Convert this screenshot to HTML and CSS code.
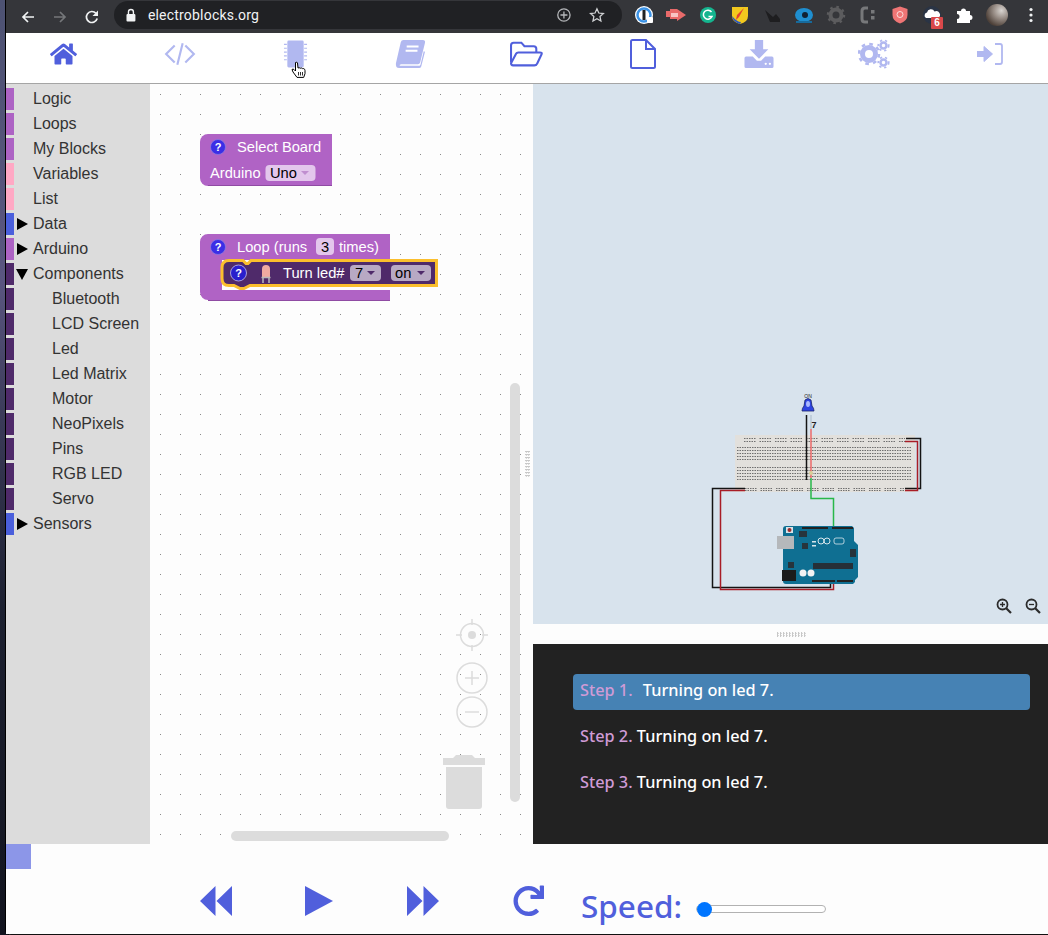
FILE: index.html
```html
<!DOCTYPE html>
<html lang="en">
<head>
    <meta charset="UTF-8">
    <title>Electroblocks</title>
    <link rel="stylesheet" href="styles.css">
</head>
<body>
<div class="window">
    <!-- browser chrome -->
    <div class="browser-bar">
        <svg class="chrome-btn" viewBox="0 0 16 16"><path d="M14 8H3M8 3 3 8l5 5" fill="none" stroke="#f1f3f4" stroke-width="1.7"/></svg>
        <svg class="chrome-btn dim" viewBox="0 0 16 16"><path d="M2 8h11M8 3l5 5-5 5" fill="none" stroke="#75777a" stroke-width="1.7"/></svg>
        <svg class="chrome-btn" viewBox="0 0 16 16"><path d="M13.2 9.5A5.5 5.5 0 1 1 12 4.3" fill="none" stroke="#f1f3f4" stroke-width="1.7"/><path d="M14 1.5V7H8.5z" fill="#f1f3f4"/></svg>
        <div class="url-pill">
            <svg class="lock" viewBox="0 0 12 14"><path d="M3.5 6V4a2.5 2.5 0 0 1 5 0v2" fill="none" stroke="#f1f3f4" stroke-width="1.4"/><rect x="1.5" y="6" width="9" height="7.5" rx="1" fill="#f1f3f4"/></svg>
            <span class="url-text">electroblocks.org</span>
            <svg class="url-icon" viewBox="0 0 16 16"><circle cx="8" cy="8" r="6.2" fill="none" stroke="#b5b7ba" stroke-width="1.3"/><path d="M8 4.5v7M4.5 8h7" stroke="#b5b7ba" stroke-width="1.3"/></svg>
            <svg class="url-icon" viewBox="0 0 16 16"><path d="m8 1.8 1.9 4.2 4.6.5-3.4 3.1.9 4.5-4-2.3-4 2.3.9-4.5L1.5 6.5l4.6-.5z" fill="none" stroke="#d0d2d4" stroke-width="1.3"/></svg>
        </div>
        <div class="extensions">
            <svg class="ext" viewBox="0 0 20 20"><circle cx="10" cy="10" r="9" fill="#fff"/><circle cx="10" cy="10" r="6.5" fill="none" stroke="#3b93e6" stroke-width="2.5"/><rect x="8.5" y="5" width="3" height="10" fill="#222"/><rect x="13" y="12" width="6" height="6" rx="1" fill="#fff"/></svg>
            <svg class="ext" viewBox="0 0 20 20"><path d="M0 6h4V4h7l9 6-9 6v-2H4v-2H0z" fill="#e86a6a"/><rect x="5" y="8" width="7" height="4" fill="#f8c4c4"/></svg>
            <svg class="ext" viewBox="0 0 20 20"><circle cx="10" cy="10" r="8" fill="#15b58f"/><path d="M13.5 7A4.5 4.5 0 1 0 14 11.5H10.5" fill="none" stroke="#fff" stroke-width="1.5"/></svg>
            <svg class="ext" viewBox="0 0 20 20"><path d="M2 2h16v9q0 6-8 8-8-2-8-8z" fill="#f2c81e"/><path d="M14 3 9 12l-3 3 1-5z" fill="#e0402e"/><path d="M2 11q5 6 9 6l-1 2q-7-2-8-8z" fill="#2a55c0"/></svg>
            <svg class="ext" viewBox="0 0 20 20"><path d="M3 5l8 7 3-3 4 5v3H8z" fill="#1e1e20"/></svg>
            <svg class="ext" viewBox="0 0 20 20"><ellipse cx="10" cy="10" rx="9" ry="7" fill="#1f8fd0"/><circle cx="11" cy="10" r="3" fill="#123"/><path d="M2 16h16v2H2z" fill="#176a9c"/></svg>
            <svg class="ext" viewBox="0 0 20 20"><circle cx="10" cy="10" r="5.5" fill="none" stroke="#5c5c5e" stroke-width="4"/><circle cx="10" cy="10" r="8" fill="none" stroke="#5c5c5e" stroke-width="2.5" stroke-dasharray="2.5 3.8"/></svg>
            <svg class="ext" viewBox="0 0 20 20"><path d="M10 3H7Q4 3 4 6v8q0 3 3 3h3" fill="none" stroke="#77787a" stroke-width="3"/><rect x="13" y="5" width="3.5" height="3.5" fill="#77787a"/><rect x="13" y="11" width="3.5" height="3.5" fill="#77787a"/></svg>
            <svg class="ext" viewBox="0 0 20 20"><path d="M10 1.5 17.5 4v6q0 6-7.5 8.5Q2.5 16 2.5 10V4z" fill="#ef7575"/><circle cx="10" cy="9.5" r="3" fill="none" stroke="#fbdcdc" stroke-width="1"/></svg>
            <div class="ext cloud">
                <svg viewBox="0 0 20 20"><circle cx="10" cy="10" r="9" fill="#2a3445"/><path d="M4 13a3 3 0 0 1 1-5.5 4 4 0 0 1 7.5-1A3.5 3.5 0 0 1 16 13z" fill="#fff"/></svg>
                <span class="badge">6</span>
            </div>
            <svg class="ext" viewBox="0 0 20 20"><path d="M3 6h4a2.5 2.5 0 1 1 5 0h4v4a2.5 2.5 0 1 1 0 5v3H3v-4a2.5 2.5 0 1 0 0-5z" fill="#fff"/></svg>
            <div class="avatar"></div>
            <svg class="ext-menu" viewBox="0 0 4 16"><circle cx="2" cy="2.5" r="1.6" fill="#f1f3f4"/><circle cx="2" cy="8" r="1.6" fill="#f1f3f4"/><circle cx="2" cy="13.5" r="1.6" fill="#f1f3f4"/></svg>
        </div>
    </div>

    <!-- main navigation -->
    <nav class="nav">
        <a class="nav-item">
            <svg class="nav-icon home" viewBox="0 0 576 512"><path d="M280.37 148.26L96 300.11V464a16 16 0 0 0 16 16l112.06-.29a16 16 0 0 0 15.92-16V368a16 16 0 0 1 16-16h64a16 16 0 0 1 16 16v95.64a16 16 0 0 0 16 16.05L464 480a16 16 0 0 0 16-16V300L295.67 148.26a12.19 12.19 0 0 0-15.3 0zM571.6 251.47L488 182.56V44.05a12 12 0 0 0-12-12h-56a12 12 0 0 0-12 12v72.61L318.47 43a48 48 0 0 0-61 0L4.34 251.47a12 12 0 0 0-1.6 16.9l25.5 31A12 12 0 0 0 45.15 301l235.22-193.74a12.19 12.19 0 0 1 15.3 0L530.9 301a12 12 0 0 0 16.9-1.6l25.5-31a12 12 0 0 0-1.7-16.93z"/></svg>
        </a>
        <a class="nav-item off">
            <svg class="nav-icon" viewBox="0 0 30 24"><path d="M10 4 2 12l8 8M20 4l8 8-8 8M17.5 2l-5 20" fill="none" stroke="currentColor" stroke-width="2"/></svg>
        </a>
        <a class="nav-item off">
            <svg class="nav-icon chip" viewBox="0 0 26 28"><rect x="4.5" y="0" width="17" height="28" rx="1.5"/><path d="M1 4h3M1 8h3M1 12h3M1 16h3M1 20h3M22 4h3M22 8h3M22 12h3M22 16h3M22 20h3" stroke="currentColor" stroke-width="1.2"/></svg>
        </a>
        <a class="nav-item off">
            <svg class="nav-icon" viewBox="0 0 28 26"><path d="M7 0h18q2.5 0 2 2.5L22.500 21q-.5 1.500-2 1.500H5Q3 22.500 3.500 24H22l.8-1 3-12.500 1.200.5L23.500 24.500q-.5 1.500-2 1.500H3Q-.5 26 0 21.500L4.500 2Q5 0 7 0z"/><path d="M10 6h11M9 10h11" stroke="#fff" stroke-width="1.8"/></svg>
        </a>
        <a class="nav-item">
            <svg class="nav-icon wide" viewBox="0 0 32 24"><path d="M1 20V3.500Q1 1 3.500 1h7.500l3 3.500h9q2.500 0 2.500 2.500v3M1 21 6 11.500Q6.500 10.500 8 10.500h21q2.500 0 1.500 2L26.500 21q-.8 2-3 2H3q-2 0-2-2z" fill="none" stroke="currentColor" stroke-width="2"/></svg>
        </a>
        <a class="nav-item">
            <svg class="nav-icon tall" viewBox="0 0 26 30"><path d="M1 2.500Q1 1 2.500 1H16l9 9v17.500q0 1.500-1.500 1.500h-21Q1 29 1 27.500zM16 1v9h9" fill="none" stroke="currentColor" stroke-width="2"/></svg>
        </a>
        <a class="nav-item off">
            <svg class="nav-icon" viewBox="0 0 28 27"><path d="M10 0h8v9h5l-9 9-9-9h5zM0 17.500Q0 16 1.500 16H8l4 4h4l4-4h6.500q1.500 0 1.500 1.500v8q0 1.500-1.500 1.500h-25Q0 27 0 25.500z"/><circle cx="20.5" cy="23" r="1.1" fill="#fff"/><circle cx="24.5" cy="23" r="1.1" fill="#fff"/></svg>
        </a>
        <a class="nav-item off">
            <svg class="nav-icon tall" viewBox="0 0 32 29">
                <circle cx="11" cy="14.5" r="6.5" fill="none" stroke="currentColor" stroke-width="5"/>
                <circle cx="11" cy="14.5" r="10" fill="none" stroke="currentColor" stroke-width="2.6" stroke-dasharray="3.6 4.25"/>
                <circle cx="25.5" cy="6" r="3" fill="none" stroke="currentColor" stroke-width="2.5"/>
                <circle cx="25.5" cy="6" r="5.2" fill="none" stroke="currentColor" stroke-width="1.8" stroke-dasharray="2.2 2.88"/>
                <circle cx="25.5" cy="23" r="3" fill="none" stroke="currentColor" stroke-width="2.5"/>
                <circle cx="25.5" cy="23" r="5.2" fill="none" stroke="currentColor" stroke-width="1.8" stroke-dasharray="2.2 2.88"/>
            </svg>
        </a>
        <a class="nav-item off">
            <svg class="nav-icon login" viewBox="0 0 26 22"><path d="M0 8.5h7V3.500L15.500 11 7 18.500v-5H0z" stroke="currentColor" stroke-linejoin="round"/><path d="M18 1h5q2 0 2 2v16q0 2-2 2h-5" fill="none" stroke="currentColor" stroke-width="1.8"/></svg>
        </a>
        <svg class="hand-cursor" viewBox="0 0 16 19"><path d="M4.500 1.500q1.500-1 2 .5l.5 5 1.200-.3 1 .5 1.300-.2 1 .6 1.300 0q1.200.5 1.200 2v3l-1.300 3.800H6L2 11 1 8.500q1-1 2.200.2L4.500 10z" fill="#fff" stroke="#000" stroke-width="1"/><path d="M7.5 11v3.500M9.5 11v3.500M11.5 11v3.500" stroke="#000" stroke-width=".8"/></svg>
    </nav>

    <div class="main">
        <!-- toolbox categories -->
        <ul class="toolbox">
            <li class="cat purple">Logic</li>
            <li class="cat purple">Loops</li>
            <li class="cat purple">My Blocks</li>
            <li class="cat pink">Variables</li>
            <li class="cat pink">List</li>
            <li class="cat blue closed">Data</li>
            <li class="cat purple closed">Arduino</li>
            <li class="cat dark open">Components</li>
            <li class="cat dark sub">Bluetooth</li>
            <li class="cat dark sub">LCD Screen</li>
            <li class="cat dark sub">Led</li>
            <li class="cat dark sub">Led Matrix</li>
            <li class="cat dark sub">Motor</li>
            <li class="cat dark sub">NeoPixels</li>
            <li class="cat dark sub">Pins</li>
            <li class="cat dark sub">RGB LED</li>
            <li class="cat dark sub">Servo</li>
            <li class="cat blue closed">Sensors</li>
        </ul>

        <!-- block workspace -->
        <div class="workspace">
            <svg class="block-canvas" viewBox="150 84 383 760">
                <path d="M200 142a8 8 0 0 1 8-8H332V186H208a8 8 0 0 1-8-8z" class="block" />
                <path d="M208 185.5H332" stroke="#8f4ba3" />
                <circle cx="218" cy="147" r="7.5" class="help" />
                <text x="218" y="151" class="help-q">?</text>
                <text x="237" y="152" class="block-text">Select Board</text>
                <text x="210" y="178" class="block-text">Arduino</text>
                <rect x="265.5" y="165" width="50" height="16" rx="4" class="field" />
                <text x="270" y="178" class="field-text">Uno</text>
                <path d="m301 171 8 0-4 4z" fill="#c08ecf" />

                <path d="M200 242a8 8 0 0 1 8-8H390V260H222V290H390V300H208a8 8 0 0 1-8-8z" class="block" />
                <path d="M208 300.5H390" stroke="#8f4ba3" />
                <circle cx="218" cy="247" r="7.5" class="help" />
                <text x="218" y="251" class="help-q">?</text>
                <text x="237" y="252" class="block-text">Loop (runs</text>
                <rect x="316" y="238" width="18" height="17" rx="4" class="field" />
                <text x="325" y="252" class="field-text mid">3</text>
                <text x="339" y="252" class="block-text">times)</text>

                <path d="M229 260.5H243l3 3h2l3-3H436.5V285.5H250l-6 3h-4l-6-3H229q-7 0-7-7V267.5q0-7 7-7z" class="selected" />
                <circle cx="238.5" cy="273" r="8" class="help dark" />
                <text x="238.5" y="277" class="help-q">?</text>
                <path d="M262 277v-8a4 4 0 0 1 8 0v8z" fill="#efaaa0" />
                <path d="M261.5 277.5h9M263 278v5M269 278v5" stroke="#b9b9b9" stroke-width="1.5" />
                <text x="283" y="278" class="block-text">Turn led#</text>
                <rect x="350" y="265" width="31" height="16" rx="4" class="field-dark" />
                <text x="355" y="278" class="field-text">7</text>
                <path d="m367 271 8 0-4 4z" fill="#4f2a6a" />
                <rect x="391" y="265" width="40" height="16" rx="4" class="field-dark" />
                <text x="395" y="278" class="field-text">on</text>
                <path d="m417 271 8 0-4 4z" fill="#4f2a6a" />

                <!-- zoom controls and trash -->
                <g class="ctl">
                    <circle cx="472" cy="635" r="11.5" />
                    <path d="M472 619v6M472 645v6M456 635h6M482 635h6" />
                    <circle cx="472" cy="635" r="4" class="ctl-fill" />
                    <circle cx="472" cy="678" r="15" />
                    <path d="M465 678h14M472 671v14" />
                    <circle cx="472" cy="712" r="15" />
                    <path d="M465 712h14" />
                </g>
                <path d="M443 758h10l3-3h16l3 3h10v7h-42zM446 767h36v39q0 3-3 3h-30q-3 0-3-3z" class="ctl-fill" />

                <rect x="510" y="383" width="10" height="419" rx="5" class="scroll" />
                <rect x="231" y="831" width="218" height="10" rx="5" class="scroll" />
            </svg>
            <div class="v-handle"></div>
        </div>

        <div class="right">
            <!-- arduino simulator -->
            <div class="simulator">
                <svg class="circuit" viewBox="533 84 515 540">
                    <rect x="735" y="435" width="180" height="57" fill="#e2e0dc" />
                    <g class="holes">
                        <path d="M744 438.5H905M744 441.5H905" stroke-dasharray="1.5 1 1.5 1 1.5 1 1.5 1 1.5 4" />
                        <path d="M737 447.5H912M737 450.5H912M737 453.5H912M737 456.5H912M737 459.5H912M737 467.5H912M737 470.5H912M737 473.5H912M737 476.5H912M737 479.5H912" stroke-dasharray="1.5 1" />
                        <path d="M745 488.5H905M745 490.5H905" stroke-dasharray="1.5 1 1.5 1 1.5 1 1.5 1 1.5 4" />
                    </g>
                    <path d="M906 438.5H920.5V488.5H905" class="wire-b" />
                    <path d="M905 441.5H917.5V490.5H905" class="wire-r" />
                    <path d="M745 488.5H712.5V587.5H830.5V579" class="wire-b" />
                    <path d="M745 490.5H720.5V589.5H833.5V579" class="wire-r" />
                    <path d="M806.5 415V480" class="wire-b" />
                    <path d="M811 415V429" stroke="#b9c7d4" stroke-width="1.5" fill="none" />
                    <path d="M811 429V478" stroke="#ec6a6a" stroke-width="1.5" fill="none" />
                    <path d="M811 478V498.5H833.5V529" stroke="#27b84a" stroke-width="1.5" fill="none" />
                    <circle cx="811" cy="473" r="2" fill="#d8cf98" />

                    <path d="M802 411q0-3 2-5l1-6q3-3 6 0l1 6q2 2 2 5z" fill="#2f45e0" stroke="#16226c" stroke-width=".8" />
                    <ellipse cx="808" cy="404" rx="2" ry="3" fill="#a9b8ff" />
                    <text x="808" y="398" class="led-on">ON</text>
                    <text x="814" y="428" class="led-pin">7</text>

                    <path d="M785 526H852L854 528V541L858 545V577L855 580V582L853 584H786Q783 584 783 581V529Q783 526 786 526z" fill="#0f6f92" />
                    <rect x="777" y="536" width="17" height="13" fill="#b5b8bb" />
                    <rect x="782" y="570" width="14" height="11" fill="#1b1b1b" />
                    <rect x="786" y="527" width="7" height="6" fill="#d9e3e8" />
                    <circle cx="789.5" cy="530" r="2" fill="#9b2a2a" />
                    <circle cx="803" cy="573" r="3.5" fill="#f2f2f2" />
                    <circle cx="811" cy="573" r="3.5" fill="#f2f2f2" />
                    <rect x="813" y="563" width="40" height="6" fill="#263038" />
                    <rect x="802" y="527" width="26" height="2" fill="#222" />
                    <rect x="832" y="527" width="21" height="2" fill="#222" />
                    <rect x="812" y="580" width="23" height="2" fill="#222" />
                    <rect x="837" y="580" width="16" height="2" fill="#222" />
                    <rect x="850" y="549" width="6" height="8" fill="#27343c" />
                    <rect x="799" y="531" width="8" height="6" fill="#27343c" />
                    <rect x="802" y="543" width="6" height="6" fill="#27343c" />
                    <rect x="788" y="562" width="6" height="6" fill="#27343c" />
                    <path d="M821 538a3 3 0 1 1 0 6 3 3 0 1 1 0-6zM827 538a3 3 0 1 1 0 6 3 3 0 1 1 0-6z" fill="none" stroke="#d8e6ec" stroke-width="1" />
                    <rect x="834" y="538" width="10" height="6" rx="2" fill="none" stroke="#d8e6ec" stroke-width=".8" />
                    <rect x="812" y="541" width="4" height="1.5" fill="#d8e6ec" />
                    <rect x="812" y="545" width="4" height="1.5" fill="#d8e6ec" />
                </svg>
                <div class="sim-zoom">
                    <svg class="mag" viewBox="0 0 16 16"><circle cx="6.5" cy="6.5" r="5" fill="none" stroke="#2b2b2b" stroke-width="1.8"/><path d="m10 10 5 5" stroke="#2b2b2b" stroke-width="2.2"/><path d="M4 6.5h5M6.5 4v5" stroke="#2b2b2b" stroke-width="1.3"/></svg>
                    <svg class="mag" viewBox="0 0 16 16"><circle cx="6.5" cy="6.5" r="5" fill="none" stroke="#2b2b2b" stroke-width="1.8"/><path d="m10 10 5 5" stroke="#2b2b2b" stroke-width="2.2"/><path d="M4 6.5h5" stroke="#2b2b2b" stroke-width="1.3"/></svg>
                </div>
            </div>
            <div class="h-handle"><span class="grip"></span></div>
            <!-- step list -->
            <ol class="steps">
                <li class="step active"><span class="step-no">Step 1.</span> Turning on led 7.</li>
                <li class="step"><span class="step-no">Step 2.</span> Turning on led 7.</li>
                <li class="step"><span class="step-no">Step 3.</span> Turning on led 7.</li>
            </ol>
        </div>
    </div>

    <!-- player -->
    <div class="player">
        <div class="progress"></div>
        <div class="controls">
            <svg class="ctl-btn rewind" viewBox="0 0 32 30"><path d="M15.5 0V30L0 15zM32 0V30L16.5 15z"/></svg>
            <svg class="ctl-btn play" viewBox="0 0 28 30"><path d="M0 0 28 15 0 30z"/></svg>
            <svg class="ctl-btn forward" viewBox="0 0 32 30"><path d="M0 0V30L15.5 15zM16.5 0V30L32 15z"/></svg>
            <svg class="ctl-btn redo" viewBox="0 0 512 512"><path d="M500.33 0h-47.41a12 12 0 0 0-12 12.57l4 82.76A247.42 247.42 0 0 0 256 8C119.34 8 8.05 119.53 8 256.19 8 393 119.17 504 256 504a247.1 247.1 0 0 0 166.18-63.91 12 12 0 0 0 .48-17.43l-34-34a12 12 0 0 0-16.38-.55A176 176 0 1 1 402.1 157.8l-101.53-4.87a12 12 0 0 0-12.57 12v47.41a12 12 0 0 0 12 12h200.33a12 12 0 0 0 12-12V12a12 12 0 0 0-12-12z"/></svg>
            <label class="speed" for="speed">Speed:</label>
            <input class="speed-range" id="speed" type="range" min="0" max="100" value="0">
        </div>
    </div>
</div>
</body>
</html>
```
FILE: styles.css
```css
* {
    margin: 0;
    padding: 0;
    box-sizing: border-box;
}

html, body {
    height: 935px;
    overflow: hidden;
}

body {
    background: linear-gradient(180deg, #4d5272 0%, #5a5680 30%, #3a3a58 45%, #1c2030 65%, #12141f 100%);
    font-family: "Liberation Sans", Arial, sans-serif;
}

.window {
    margin-left: 6px;
    height: 935px;
    display: flex;
    flex-direction: column;
    background: #fff;
    border-bottom: 1px solid #111;
    border-bottom-left-radius: 5px;
    box-shadow: -1px 0 0 #000;
}

/* browser bar */
.browser-bar {
    height: 33px;
    flex: none;
    display: flex;
    align-items: center;
    background: #35363a;
    padding-left: 14px;
}

.chrome-btn {
    width: 16px;
    height: 16px;
    margin-right: 16px;
}

.url-pill {
    width: 508px;
    height: 28px;
    margin-left: -2px;
    margin-top: -3px;
    background: #202124;
    border-radius: 14px;
    display: flex;
    align-items: center;
    padding-left: 11px;
}

.lock {
    width: 12px;
    height: 14px;
}

.url-text {
    color: #f1f3f4;
    font-family: Roboto, sans-serif;
    font-size: 14px;
    margin-left: 11px;
    width: 412px;
    letter-spacing: 0.2px;
}

.url-icon {
    width: 16px;
    height: 16px;
    margin-right: 17px;
}

.extensions {
    display: flex;
    align-items: center;
    margin-left: 12px;
    margin-top: -3px;
    gap: 12px;
}

.ext {
    width: 20px;
    height: 20px;
    flex: none;
}

.cloud {
    position: relative;
}

.badge {
    position: absolute;
    left: 9px;
    top: 12px;
    width: 12px;
    height: 12px;
    background: #d9484a;
    color: #fff;
    font-size: 10px;
    font-weight: bold;
    text-align: center;
    line-height: 12px;
    border-radius: 1px;
}

.avatar {
    width: 22px;
    height: 22px;
    border-radius: 50%;
    background: radial-gradient(circle at 70% 30%, #d8d4d0 0%, #9a8f88 35%, #4d4038 75%);
}

.ext-menu {
    width: 4px;
    height: 16px;
    margin-left: 9px;
}

/* navigation */
.nav {
    position: relative;
    height: 51px;
    flex: none;
    display: grid;
    grid-template-columns: repeat(9, 1fr);
    padding-bottom: 8px;
    background: #fff;
    border-bottom: 1px solid #a5a5a5;
}

.nav-item {
    display: flex;
    align-items: center;
    justify-content: center;
    color: #505fdc;
    fill: currentColor;
}

.nav-item.off {
    color: #b1b8f0;
}

.nav-icon {
    width: 32px;
    height: 28px;
}

.nav-icon.home {
    width: 27px;
    height: 24px;
}

.nav-icon.chip {
    width: 25px;
    height: 28px;
}

.nav-icon.tall {
    height: 30px;
}

.nav-icon.wide {
    width: 33px;
}

.nav-icon.login {
    width: 26px;
    height: 22px;
}

.hand-cursor {
    position: absolute;
    left: 285px;
    top: 28px;
    width: 16px;
    height: 19px;
}

/* main area */
.main {
    height: 760px;
    flex: none;
    display: flex;
}

.toolbox {
    width: 144px;
    flex: none;
    background: #dcdcdc;
    list-style: none;
    padding-top: 3px;
}

.cat {
    position: relative;
    height: 25px;
    line-height: 24px;
    padding-left: 27px;
    font-size: 16px;
    color: #333;
}

.cat::before {
    content: "";
    position: absolute;
    left: 0;
    top: 1px;
    width: 8px;
    height: 22px;
}

.purple::before { background: #ad63c4; }
.pink::before { background: #ffa8c4; }
.blue::before { background: #4a5fdc; }
.dark::before { background: #4f2a6a; }

.sub {
    padding-left: 46px;
}

.closed::after,
.open::after {
    content: "";
    position: absolute;
    top: 6px;
    left: 11px;
    border-style: solid;
}

.closed::after {
    border-width: 6px 0 6px 11px;
    border-color: transparent transparent transparent #000;
}

.open::after {
    top: 7px;
    left: 10px;
    border-width: 11px 6px 0 6px;
    border-color: #000 transparent transparent transparent;
}

.workspace {
    position: relative;
    width: 383px;
    flex: none;
    background-color: #fdfdfd;
    background-image: radial-gradient(circle at 0.5px 0.5px, #8a8a8a 0.6px, transparent 1px);
    background-size: 20px 20px;
    background-position: 10px 10px;
}

.block-canvas {
    position: absolute;
    left: 0;
    top: 0;
    width: 383px;
    height: 760px;
}

.block {
    fill: #b063c5;
}

.help {
    fill: #3b2ee6;
    stroke: #8d7fe0;
    stroke-width: 0.7;
}

.help.dark {
    fill: #2a1fcc;
    stroke: #d8d4f4;
}

.help-q {
    fill: #fff;
    font-size: 11px;
    font-weight: bold;
    text-anchor: middle;
}

.block-text {
    fill: #fff;
    font-size: 14.7px;
}

.field {
    fill: #e3c6ec;
}

.field-dark {
    fill: #b8a9c4;
}

.field-text {
    fill: #000;
    font-size: 14.7px;
}

.field-text.mid {
    text-anchor: middle;
}

.selected {
    fill: #4f2a6a;
    stroke: #fbbf2d;
    stroke-width: 3;
}

.ctl {
    fill: none;
    stroke: #dcdcdc;
    stroke-width: 1.5;
}

.ctl-fill {
    fill: #dcdcdc;
    stroke: none;
}

.scroll {
    fill: #dcdcdc;
}

.v-handle {
    position: absolute;
    right: 3px;
    top: 366px;
    width: 5px;
    height: 28px;
    background-image: radial-gradient(circle, #c8c8c8 1px, transparent 1px);
    background-size: 2.5px 3px;
}

.right {
    flex: 1;
    display: flex;
    flex-direction: column;
}

.simulator {
    position: relative;
    height: 540px;
    flex: none;
    background: #d8e3ed;
}

.circuit {
    width: 515px;
    height: 540px;
    display: block;
}

.holes {
    fill: none;
    stroke: #6f6f6f;
    stroke-width: 1;
}

.wire-b {
    fill: none;
    stroke: #141414;
    stroke-width: 1.5;
}

.wire-r {
    fill: none;
    stroke: #a81c26;
    stroke-width: 1.5;
}

.led-on {
    font-size: 5px;
    text-anchor: middle;
    fill: #222;
}

.led-pin {
    font-size: 9px;
    font-weight: bold;
    text-anchor: middle;
    fill: #222;
}

.sim-zoom {
    position: absolute;
    right: 7px;
    bottom: 10px;
    display: flex;
    gap: 13px;
}

.mag {
    width: 16px;
    height: 16px;
    display: block;
}

.h-handle {
    height: 20px;
    flex: none;
    display: flex;
    align-items: center;
    justify-content: center;
    background: #fdfdfd;
}

.grip {
    width: 30px;
    height: 5px;
    background-image: radial-gradient(circle, #c8c8c8 1px, transparent 1px);
    background-size: 3px 2.5px;
}

.steps {
    flex: 1;
    list-style: none;
    background: #222;
    padding: 30px 18px 0 40px;
    font-family: "Noto Sans", sans-serif;
    font-size: 16.3px;
    font-weight: 500;
    color: #fff;
}

.step {
    height: 36px;
    line-height: 32px;
    margin-bottom: 10px;
    padding-left: 7px;
    border-radius: 4px;
}

.step.active {
    background: #4682b4;
}

.step.active .step-no {
    margin-right: 6px;
}

.step-no {
    color: #cf9bd6;
}

/* player */
.player {
    flex: 1;
    background: #fdfdfd;
    display: flex;
    flex-direction: column;
}

.progress {
    width: 25px;
    height: 25px;
    flex: none;
    background: #8c96e8;
}

.controls {
    display: flex;
    align-items: center;
    padding-left: 194px;
    margin-top: 16px;
    height: 32px;
}

.ctl-btn {
    fill: #505fdc;
    height: 32px;
    flex: none;
}

.rewind { width: 32px; }
.play { width: 28px; margin-left: 73px; }
.forward { width: 32px; margin-left: 74px; }
.redo { width: 31px; margin-left: 74px; }

.speed {
    font-family: "Noto Sans", sans-serif;
    font-size: 31.5px;
    font-weight: 500;
    color: #505fdc;
    margin-left: 37px;
    position: relative;
    top: 4px;
}

.speed-range {
    appearance: none;
    -webkit-appearance: none;
    width: 130px;
    height: 8px;
    margin-left: 14px;
    margin-top: 16px;
    background: #fff;
    border: 1px solid #b2b2b2;
    border-radius: 4px;
}

.speed-range::-webkit-slider-thumb {
    -webkit-appearance: none;
    width: 15px;
    height: 15px;
    border-radius: 50%;
    background: #0075ff;
}
```
